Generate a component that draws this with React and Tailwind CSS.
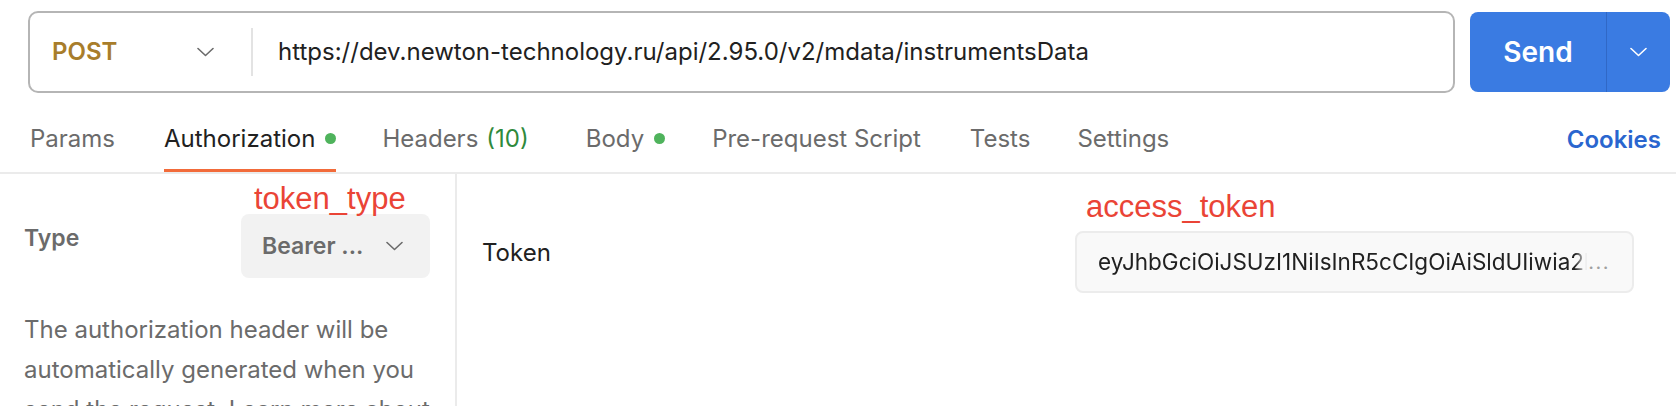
import React from "react";

const Chevron = ({ className }) => (
  <svg width="17" height="10" viewBox="0 0 17 10" fill="none" className={className}>
    <polyline points="1,1.5 8.5,8.5 16,1.5" stroke="currentColor" strokeWidth="1.6" strokeLinecap="round" strokeLinejoin="round" />
  </svg>
);

const Dot = () => <span className="ml-[10px] inline-block w-[11px] h-[11px] rounded-full bg-[#4fb35c]" />;

const Tab = ({ children, active, className = "" }) => (
  <div
    className={`h-[64px] flex items-center border-b-[3px] ${
      active ? "border-[#f26b3a] text-[#212121]" : "border-transparent text-[#6b6b6b]"
    } ${className}`}
  >
    {children}
  </div>
);

export default function App() {
  return (
    <div
      className="w-[1676px] h-[406px] overflow-hidden bg-white"
      style={{ fontFamily: "Inter, 'Noto Sans', sans-serif" }}
    >
      {/* request bar */}
      <div className="flex items-start pt-[11px] pl-[28px] gap-[15px]">
        <div className="w-[1427px] h-[82px] border-2 border-[#b5b5b5] rounded-[10px] flex items-center">
          <div className="w-[221px] flex items-center justify-between pl-[22px] pr-[37px]">
            <span className="text-[24px] font-semibold text-[#a87d2b]">POST</span>
            <Chevron className="text-[#6b6b6b]" />
          </div>
          <div className="w-[2px] h-[48px] bg-[#e3e3e3]" />
          <span className="pl-[25px] text-[24px] text-[#212121]">
            https://dev.newton-technology.ru/api/2.95.0/v2/mdata/instrumentsData
          </span>
        </div>
        <div className="mt-[1px] w-[200px] h-[80px] rounded-[8px] bg-[#3a7be2] flex text-white">
          <div className="w-[136px] flex items-center justify-center text-[28px] font-semibold">Send</div>
          <div className="w-[1px] bg-[#3068c6]" />
          <div className="flex-1 flex items-center justify-center">
            <Chevron className="text-white" />
          </div>
        </div>
      </div>

      {/* tabs */}
      <div className="mt-[15px] flex items-center pl-[30px] pr-[15px] border-b-2 border-[#ebebeb] text-[24px]">
        <div className="flex items-center">
          <Tab>Params</Tab>
          <Tab active className="ml-[49px]">
            Authorization
            <Dot />
          </Tab>
          <Tab className="ml-[46px]">
            Headers<span className="ml-[8px] text-[#2f8a3c]">(10)</span>
          </Tab>
          <Tab className="ml-[57px]">
            Body
            <Dot />
          </Tab>
          <Tab className="ml-[47px]">Pre-request Script</Tab>
          <Tab className="ml-[49px]">Tests</Tab>
          <Tab className="ml-[47px]">Settings</Tab>
        </div>
        <div className="ml-auto font-semibold text-[#2a66cf]">Cookies</div>
      </div>

      {/* body */}
      <div className="flex">
        <div className="relative w-[457px] h-[240px] border-r-2 border-[#ebebeb] pl-[24px] pr-[25px] pt-[40px]">
          <span
            className="absolute left-[254px] top-[10px] text-[31px] leading-[30px] text-[#ea4436]"
            style={{ fontFamily: "'Liberation Sans', Arial, sans-serif" }}
          >
            token_type
          </span>
          <div className="flex items-start justify-between">
            <span className="mt-[8px] text-[23px] leading-[32px] font-semibold text-[#6b6b6b]">Type</span>
            <div className="w-[189px] h-[64px] rounded-[8px] bg-[#f2f2f2] flex items-center justify-between pl-[21px] pr-[27px]">
              <span className="text-[23px] font-semibold text-[#6b6b6b]">Bearer ...</span>
              <Chevron className="text-[#6b6b6b]" />
            </div>
          </div>
          <p className="mt-[32px] text-[24px] leading-[40px] text-[#6b6b6b] whitespace-nowrap">
            The authorization header will be
            <br />
            automatically generated when you
            <br />
            send the request. Learn more about
          </p>
        </div>

        <div className="flex-1 flex items-start justify-between pl-[25px] pr-[42px]">
          <span className="mt-[63px] text-[24px] leading-[32px] text-[#212121]">Token</span>
          <div className="relative mt-[57px] w-[559px] h-[62px] rounded-[8px] border-2 border-[#ececec] bg-[#f9f9f9] flex items-center pl-[21px] pr-[22px]">
            <span
              className="absolute left-[9px] top-[-41px] text-[31px] leading-[30px] text-[#ea4436]"
              style={{ fontFamily: "'Liberation Sans', Arial, sans-serif" }}
            >
              access_token
            </span>
            <span className="flex-1 min-w-0 overflow-hidden whitespace-nowrap text-[22.5px] text-[#212121] [mask-image:linear-gradient(to_right,#000_calc(100%-12px),transparent)]">
              eyJhbGciOiJSUzI1NiIsInR5cCIgOiAiSldUIiwia2lkIiA6ICJ4dGxyQ2Vq
            </span>
            <span className="pl-[1px] text-[20px] tracking-[1.5px] text-[#a0a0a0]">...</span>
          </div>
        </div>
      </div>
    </div>
  );
}
